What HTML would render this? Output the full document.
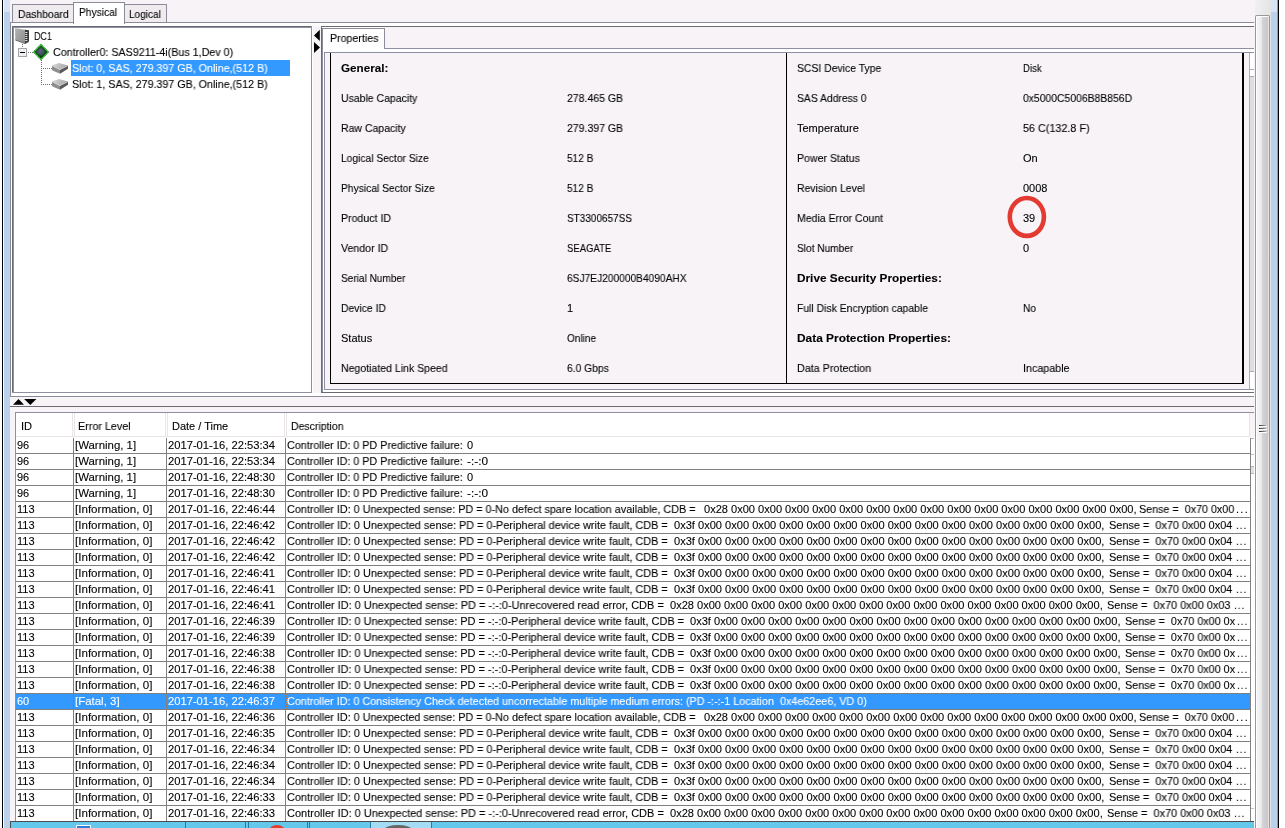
<!DOCTYPE html>
<html><head><meta charset="utf-8"><title>MegaRAID Storage Manager</title>
<style>
*{box-sizing:border-box}
html,body{margin:0;padding:0}
body{width:1285px;height:828px;overflow:hidden;background:#fff;position:relative;font-family:"Liberation Sans",sans-serif;font-size:11px;color:#000}
.a{position:absolute}
.t{position:absolute;white-space:pre;line-height:13px;height:13px;transform-origin:0 0;will-change:transform;-webkit-text-stroke:0.1px}
.b{font-weight:bold}
.hl{position:absolute;height:1px}
.vl{position:absolute;width:1px}
</style></head>
<body>
<div class="vl" style="left:2px;top:0px;height:828px;background:#000;width:1px"></div>
<div class="a" style="left:4px;top:0px;width:6px;height:828px;background:#b9d1ea;"></div>
<div class="a" style="left:4px;top:0px;width:6px;height:12px;background:#d6e4f3;"></div>
<div class="a" style="left:10px;top:0px;width:1245px;height:822px;background:#f7f3f7;"></div>
<div class="a" style="left:1271px;top:0px;width:6px;height:828px;background:#b9d1ea;"></div>
<div class="a" style="left:1271px;top:0px;width:6px;height:12px;background:#d6e4f3;"></div>
<div class="vl" style="left:1277px;top:0px;height:828px;background:#30c0f0;width:1px"></div>
<div class="vl" style="left:1278px;top:0px;height:828px;background:#000;width:1px"></div>
<div class="a" style="left:1255px;top:0px;width:16px;height:828px;background:linear-gradient(90deg,#f0f0f0,#e4e4e4);"></div>
<div class="a" style="left:1255px;top:15px;width:15px;height:813px;border:1px solid #989898;border-bottom:none;border-radius:2px 2px 0 0;background:linear-gradient(90deg,#f6f6f6 0%,#ececec 40%,#d4d4d8 50%,#c4c4c8 100%);box-shadow:inset 1px 1px 0 #fff,inset -1px 0 0 #e4e4e6"></div>
<div class="hl" style="left:1259px;top:425px;width:7px;background:linear-gradient(90deg,#2a2a2a,#a8a8a8)"></div>
<div class="hl" style="left:1259px;top:426px;width:8px;background:#fff"></div>
<div class="hl" style="left:1259px;top:428px;width:7px;background:linear-gradient(90deg,#2a2a2a,#a8a8a8)"></div>
<div class="hl" style="left:1259px;top:429px;width:8px;background:#fff"></div>
<div class="hl" style="left:1259px;top:431px;width:7px;background:linear-gradient(90deg,#2a2a2a,#a8a8a8)"></div>
<div class="hl" style="left:1259px;top:432px;width:8px;background:#fff"></div>
<div class="hl" style="left:10px;top:22px;width:1244px;background:#8c8c98"></div>
<div class="vl" style="left:10px;top:22px;height:375px;background:#8c8c98;width:1px"></div>
<div class="a" style="left:11px;top:23px;width:1243px;height:3px;background:#fff;"></div>
<div class="a" style="left:11px;top:393px;width:1243px;height:3px;background:#fff;"></div>
<div class="vl" style="left:11px;top:23px;height:373px;background:#fff;width:1px"></div>
<div class="a" style="left:12px;top:4px;width:62px;height:18px;background:#efebef;border:1px solid #8c8c98;border-bottom:none"></div>
<div id="t1" class="t " style="left:18.0px;top:8px;transform:scaleX(0.9407);">Dashboard</div>
<div class="a" style="left:124px;top:4px;width:43px;height:18px;background:#efebef;border:1px solid #8c8c98;border-bottom:none"></div>
<div id="t2" class="t " style="left:129.0px;top:8px;transform:scaleX(0.9143);">Logical</div>
<div class="a" style="left:73px;top:2px;width:52px;height:22px;background:#fff;border:1px solid #8c8c98;border-bottom:none"></div>
<div id="t3" class="t " style="left:79.0px;top:6px;transform:scaleX(0.9293);">Physical</div>
<div class="a" style="left:12px;top:26px;width:300px;height:367px;background:#fff;"></div>
<div class="hl" style="left:12px;top:26px;width:300px;background:#6a6a72"></div>
<div class="vl" style="left:12px;top:26px;height:367px;background:#6a6a72;width:1px"></div>
<div class="hl" style="left:13px;top:27px;width:299px;background:#8c90a0"></div>
<div class="vl" style="left:13px;top:27px;height:366px;background:#8c90a0;width:1px"></div>
<div class="vl" style="left:311px;top:26px;height:367px;background:#8c90a0;width:1px"></div>
<div class="hl" style="left:12px;top:392px;width:300px;background:#8c90a0"></div>
<div class="vl" style="left:312px;top:26px;height:367px;background:#fff;width:1px"></div>
<div class="a" style="left:71px;top:60px;width:219px;height:16px;background:#3399ff;"></div>
<div id="t4" class="t " style="left:34.0px;top:30px;transform:scaleX(0.8091);">DC1</div>
<div id="t5" class="t " style="left:53.0px;top:46px;transform:scaleX(0.9735);">Controller0: SAS9211-4i(Bus 1,Dev 0)</div>
<div id="t6" class="t " style="left:72.0px;top:62px;color:#fff;transform:scaleX(0.9726);">Slot: 0, SAS, 279.397 GB, Online,(512 B)</div>
<div id="t7" class="t " style="left:72.0px;top:78px;transform:scaleX(0.9726);">Slot: 1, SAS, 279.397 GB, Online,(512 B)</div>
<svg class="a" style="left:12px;top:26px" width="62" height="68" viewBox="12 26 62 68">
<defs>
<linearGradient id="g1" x1="0" y1="0" x2="1" y2="1"><stop offset="0" stop-color="#b4b4b4"/><stop offset="1" stop-color="#8c8c8c"/></linearGradient>
<linearGradient id="g2" x1="0" y1="0" x2="1" y2="0.300"><stop offset="0" stop-color="#d8d8d8"/><stop offset="0.500" stop-color="#c0c0c0"/><stop offset="1" stop-color="#a8a8a8"/></linearGradient>
<radialGradient id="g3" cx="0.450" cy="0.400" r="0.600"><stop offset="0" stop-color="#6a5a8a"/><stop offset="0.600" stop-color="#2a5a4a"/><stop offset="1" stop-color="#0a1a10"/></radialGradient>
</defs>
<g fill="#707070" shape-rendering="crispEdges">
<rect x="22" y="44" width="1" height="1"/><rect x="22" y="46" width="1" height="1"/>
<rect x="28" y="52" width="1" height="1"/><rect x="30" y="52" width="1" height="1"/><rect x="32" y="52" width="1" height="1"/>
<path d="M41 60h1v1h-1zM41 62h1v1h-1zM41 64h1v1h-1zM41 66h1v1h-1zM41 68h1v1h-1zM41 70h1v1h-1zM41 72h1v1h-1zM41 74h1v1h-1zM41 76h1v1h-1zM41 78h1v1h-1zM41 80h1v1h-1zM41 82h1v1h-1zM41 84h1v1h-1z"/>
<path d="M43 68h1v1h-1zM45 68h1v1h-1zM47 68h1v1h-1zM49 68h1v1h-1zM51 68h1v1h-1zM43 84h1v1h-1zM45 84h1v1h-1zM47 84h1v1h-1zM49 84h1v1h-1zM51 84h1v1h-1z"/>
</g>
<g shape-rendering="crispEdges"><rect x="18.500" y="48.500" width="8" height="8" fill="#f2eef2" stroke="#a4a4ac"/><rect x="20" y="52" width="5" height="1" fill="#000"/></g>
<g>
<path d="M15 28.200l10 1.600v13.700l-9.700-3.600z" fill="url(#g1)"/>
<path d="M15 28.200l10 1.600 4 0.400-10-1.700z" fill="#c8c8c8"/>
<path d="M25 29.800l4 0.400v11.300l-4 2.200z" fill="#3a3a3a"/>
<path d="M25.300 32.500h2M25.300 34.500h2M25.300 36.500h2M25.300 38.500h2M25.300 40.500h2" stroke="#e8e8e8" stroke-width="1"/>
<path d="M15.300 40l9.700 3.600 4-2.200" fill="none" stroke="#555" stroke-width="0.800"/>
</g>
<g>
<path d="M41 43.800l8 8.200-8 8.200-8-8.200z" fill="#2db82d"/>
<path d="M41 43.800l8 8.200-8 8.200-8-8.200z" fill="none" stroke="#1e7a1e" stroke-width="0.700" stroke-dasharray="1 1"/>
<path d="M41 46.300l5.700 5.700-5.700 5.700-5.700-5.700z" fill="url(#g3)" stroke="#0a200a" stroke-width="0.800" stroke-linejoin="round"/>
</g>
<g>
<path d="M52 65.600l7-2.600 9 2.500-8 4.200z" fill="url(#g2)"/>
<path d="M52 65.600l8 4.100v4l-8-3.400z" fill="#8e8e8e"/>
<path d="M60 69.700l8-4.200v3.200l-8 5z" fill="#585858"/>
<path d="M52 65.600l8 4.100 8-4.200" fill="none" stroke="#e4e4e4" stroke-width="0.600"/>
</g>
<g transform="translate(0 16)">
<path d="M52 65.600l7-2.600 9 2.500-8 4.200z" fill="url(#g2)"/>
<path d="M52 65.600l8 4.100v4l-8-3.400z" fill="#8e8e8e"/>
<path d="M60 69.700l8-4.200v3.200l-8 5z" fill="#585858"/>
<path d="M52 65.600l8 4.100 8-4.200" fill="none" stroke="#e4e4e4" stroke-width="0.600"/>
</g>
</svg>
<svg class="a" style="left:313px;top:29px" width="8" height="26" viewBox="313 29 8 26"><path d="M319.800 29.800v11.200l-5.800-5.600z" fill="#000"/><path d="M314 41.900v11.200l6-5.600z" fill="#000"/></svg>
<div class="hl" style="left:321px;top:26px;width:933px;background:#6a6a72"></div>
<div class="vl" style="left:321px;top:26px;height:367px;background:#6a6a72;width:1px"></div>
<div class="vl" style="left:322px;top:27px;height:365px;background:#8c90a0;width:1px"></div>
<div class="hl" style="left:321px;top:392px;width:933px;background:#6a6a72"></div>
<div class="a" style="left:322px;top:27px;width:63px;height:1px;background:#fff;"></div>
<div class="a" style="left:323px;top:28px;width:61px;height:24px;background:#fff;"></div>
<div class="hl" style="left:322px;top:28px;width:63px;background:#8c8c98"></div>
<div class="vl" style="left:322px;top:28px;height:21px;background:#8c8c98;width:1px"></div>
<div class="vl" style="left:384px;top:28px;height:22px;background:#8c8c98;width:1px"></div>
<div class="hl" style="left:384px;top:48px;width:870px;background:#8c90a0"></div>
<div class="a" style="left:323px;top:49px;width:931px;height:3px;background:#fff;"></div>
<div class="vl" style="left:323px;top:49px;height:343px;background:#fff;width:1px"></div>
<div class="a" style="left:323px;top:390px;width:931px;height:2px;background:#fff;"></div>
<div class="hl" style="left:324px;top:52px;width:930px;background:#8c90a0"></div>
<div class="vl" style="left:324px;top:52px;height:338px;background:#8c90a0;width:1px"></div>
<div class="hl" style="left:324px;top:389px;width:930px;background:#8c90a0"></div>
<div id="t8" class="t " style="left:330.0px;top:32px;transform:scaleX(0.9660);">Properties</div>
<div class="vl" style="left:330px;top:53px;height:331px;background:#000;width:1px"></div>
<div class="vl" style="left:786px;top:53px;height:331px;background:#000;width:1px"></div>
<div class="vl" style="left:1242px;top:53px;height:331px;background:#000;width:2px"></div>
<div class="hl" style="left:330px;top:383px;width:914px;background:#000"></div>
<div class="a" style="left:1250px;top:53px;width:4px;height:336px;background:#dedede;"></div>
<div class="a" style="left:1250px;top:53px;width:4px;height:23px;background:#fff;"></div>
<div class="hl" style="left:1250px;top:69px;width:4px;background:#aaa"></div>
<div class="hl" style="left:1250px;top:76px;width:4px;background:#aaa"></div>
<div class="a" style="left:1250px;top:371px;width:4px;height:18px;background:#fff;"></div>
<div class="hl" style="left:1250px;top:371px;width:4px;background:#aaa"></div>
<div class="vl" style="left:1249px;top:53px;height:336px;background:#b0b0b0;width:1px"></div>
<div id="t9" class="t b" style="left:341.0px;top:62px;transform:scaleX(1.0591);">General:</div>
<div id="t10" class="t " style="left:797.0px;top:62px;transform:scaleX(0.9461);">SCSI Device Type</div>
<div id="t11" class="t " style="left:1023.0px;top:62px;transform:scaleX(0.8682);">Disk</div>
<div id="t12" class="t " style="left:341.0px;top:92px;transform:scaleX(0.9538);">Usable Capacity</div>
<div id="t13" class="t " style="left:567.0px;top:92px;transform:scaleX(0.9552);">278.465 GB</div>
<div id="t14" class="t " style="left:797.0px;top:92px;transform:scaleX(0.9405);">SAS Address 0</div>
<div id="t15" class="t " style="left:1023.0px;top:92px;transform:scaleX(0.9431);">0x5000C5006B8B856D</div>
<div id="t16" class="t " style="left:341.0px;top:122px;transform:scaleX(0.9559);">Raw Capacity</div>
<div id="t17" class="t " style="left:567.0px;top:122px;transform:scaleX(0.9552);">279.397 GB</div>
<div id="t18" class="t " style="left:797.0px;top:122px;transform:scaleX(1.0000);">Temperature</div>
<div id="t19" class="t " style="left:1023.0px;top:122px;transform:scaleX(0.9809);">56 C(132.8 F)</div>
<div id="t20" class="t " style="left:341.0px;top:152px;transform:scaleX(0.9319);">Logical Sector Size</div>
<div id="t21" class="t " style="left:567.0px;top:152px;transform:scaleX(0.9138);">512 B</div>
<div id="t22" class="t " style="left:797.0px;top:152px;transform:scaleX(0.9606);">Power Status</div>
<div id="t23" class="t " style="left:1023.0px;top:152px;transform:scaleX(1.0000);">On</div>
<div id="t24" class="t " style="left:341.0px;top:182px;transform:scaleX(0.9340);">Physical Sector Size</div>
<div id="t25" class="t " style="left:567.0px;top:182px;transform:scaleX(0.9138);">512 B</div>
<div id="t26" class="t " style="left:797.0px;top:182px;transform:scaleX(0.9507);">Revision Level</div>
<div id="t27" class="t " style="left:1023.0px;top:182px;transform:scaleX(1.0000);">0008</div>
<div id="t28" class="t " style="left:341.0px;top:212px;transform:scaleX(0.9635);">Product ID</div>
<div id="t29" class="t " style="left:567.0px;top:212px;transform:scaleX(0.9069);">ST3300657SS</div>
<div id="t30" class="t " style="left:797.0px;top:212px;transform:scaleX(0.9578);">Media Error Count</div>
<div id="t31" class="t " style="left:1023.0px;top:212px;transform:scaleX(1.0000);">39</div>
<div id="t32" class="t " style="left:341.0px;top:242px;transform:scaleX(0.9633);">Vendor ID</div>
<div id="t33" class="t " style="left:567.0px;top:242px;transform:scaleX(0.8667);">SEAGATE</div>
<div id="t34" class="t " style="left:797.0px;top:242px;transform:scaleX(0.9210);">Slot Number</div>
<div id="t35" class="t " style="left:1023.0px;top:242px;transform:scaleX(1.0000);">0</div>
<div id="t36" class="t " style="left:341.0px;top:272px;transform:scaleX(0.9155);">Serial Number</div>
<div id="t37" class="t " style="left:567.0px;top:272px;transform:scaleX(0.9264);">6SJ7EJ200000B4090AHX</div>
<div id="t38" class="t b" style="left:797.0px;top:272px;transform:scaleX(1.0719);">Drive Security Properties:</div>
<div id="t39" class="t " style="left:341.0px;top:302px;transform:scaleX(0.9417);">Device ID</div>
<div id="t40" class="t " style="left:567.2px;top:302px;transform:scaleX(1.0000);">1</div>
<div id="t41" class="t " style="left:797.0px;top:302px;transform:scaleX(0.9439);">Full Disk Encryption capable</div>
<div id="t42" class="t " style="left:1023.0px;top:302px;transform:scaleX(0.9214);">No</div>
<div id="t43" class="t " style="left:341.0px;top:332px;transform:scaleX(1.0000);">Status</div>
<div id="t44" class="t " style="left:567.0px;top:332px;transform:scaleX(0.9125);">Online</div>
<div id="t45" class="t b" style="left:797.0px;top:332px;transform:scaleX(1.0810);">Data Protection Properties:</div>
<div id="t46" class="t " style="left:341.0px;top:362px;transform:scaleX(0.9577);">Negotiated Link Speed</div>
<div id="t47" class="t " style="left:567.0px;top:362px;transform:scaleX(0.9356);">6.0 Gbps</div>
<div id="t48" class="t " style="left:797.0px;top:362px;transform:scaleX(0.9776);">Data Protection</div>
<div id="t49" class="t " style="left:1023.0px;top:362px;transform:scaleX(0.9750);">Incapable</div>
<svg class="a" style="left:1004px;top:192px" width="46" height="50" viewBox="1004 192 46 50"><ellipse cx="1026.850" cy="216.950" rx="17.050" ry="18.950" fill="none" stroke="#e33a31" stroke-width="4.600"/></svg>
<div class="hl" style="left:10px;top:396px;width:1244px;background:#8c8c98"></div>
<div class="hl" style="left:10px;top:406px;width:1244px;background:#6a6a72"></div>
<svg class="a" style="left:12px;top:398px" width="26" height="8" viewBox="12 398 26 8"><path d="M13 404.800h11l-5.500-5.800z" fill="#000"/><path d="M24.200 399h12.200l-6.100 6z" fill="#000"/></svg>
<div class="a" style="left:16px;top:413px;width:1234px;height:409px;background:#fff;"></div>
<div class="hl" style="left:15px;top:412px;width:1239px;background:#8c90a0"></div>
<div class="vl" style="left:15px;top:412px;height:410px;background:#8c90a0;width:1px"></div>
<div class="a" style="left:1250px;top:413px;width:4px;height:24px;background:#f7f3f7;"></div>
<div class="a" style="left:1251px;top:437px;width:4px;height:385px;background:#fff;"></div>
<div class="hl" style="left:1251px;top:438px;width:3px;background:#b4b4b4"></div>
<div class="hl" style="left:1251px;top:454px;width:3px;background:#c4c4c4"></div>
<div class="a" style="left:1251px;top:466px;width:3px;height:8px;background:#e2e2e2;"></div>
<div class="hl" style="left:1251px;top:466px;width:3px;background:#b4b4b4"></div>
<div class="hl" style="left:1251px;top:473px;width:3px;background:#b4b4b4"></div>
<div class="hl" style="left:1251px;top:808px;width:3px;background:#c4c4c4"></div>
<div class="hl" style="left:16px;top:436px;width:1234px;background:#e8e4e8"></div>
<div class="vl" style="left:72px;top:413px;height:24px;background:#e9e5e9;width:1px"></div>
<div class="vl" style="left:74px;top:413px;height:24px;background:#e9e5e9;width:1px"></div>
<div class="vl" style="left:165px;top:413px;height:24px;background:#e9e5e9;width:1px"></div>
<div class="vl" style="left:167px;top:413px;height:24px;background:#e9e5e9;width:1px"></div>
<div class="vl" style="left:284px;top:413px;height:24px;background:#e9e5e9;width:1px"></div>
<div class="vl" style="left:286px;top:413px;height:24px;background:#e9e5e9;width:1px"></div>
<div class="vl" style="left:1249px;top:413px;height:24px;background:#e9e5e9;width:1px"></div>
<div id="t50" class="t " style="left:21.0px;top:420px;transform:scaleX(1.0101);">ID</div>
<div id="t51" class="t " style="left:78.0px;top:420px;transform:scaleX(0.9792);">Error Level</div>
<div id="t52" class="t " style="left:172.0px;top:420px;transform:scaleX(1.0000);">Date / Time</div>
<div id="t53" class="t " style="left:291.0px;top:420px;transform:scaleX(0.9545);">Description</div>
<div class="vl" style="left:73px;top:438px;height:384px;background:#808080;width:1px"></div>
<div class="vl" style="left:166px;top:438px;height:384px;background:#808080;width:1px"></div>
<div class="vl" style="left:285px;top:438px;height:384px;background:#808080;width:1px"></div>
<div class="vl" style="left:1250px;top:438px;height:384px;background:#808080;width:1px"></div>
<div class="hl" style="left:16px;top:453px;width:1235px;background:#808080"></div>
<div id="t54" class="t " style="left:17.0px;top:439px;transform:scaleX(1.0000);">96</div>
<div id="t55" class="t " style="left:75.0px;top:439px;transform:scaleX(1.0373);">[Warning, 1]</div>
<div id="t56" class="t " style="left:168.0px;top:439px;transform:scaleX(1.0171);">2017-01-16, 22:53:34</div>
<div id="t57" class="t " style="left:287.0px;top:439px;transform:scaleX(0.9780);">Controller ID: 0 PD Predictive failure:</div>
<div id="t58" class="t " style="left:466.6px;top:439px;transform:scaleX(1.0000);">0</div>
<div class="hl" style="left:16px;top:469px;width:1235px;background:#808080"></div>
<div id="t59" class="t " style="left:17.0px;top:455px;transform:scaleX(1.0000);">96</div>
<div id="t60" class="t " style="left:75.0px;top:455px;transform:scaleX(1.0373);">[Warning, 1]</div>
<div id="t61" class="t " style="left:168.0px;top:455px;transform:scaleX(1.0171);">2017-01-16, 22:53:34</div>
<div id="t62" class="t " style="left:287.0px;top:455px;transform:scaleX(0.9780);">Controller ID: 0 PD Predictive failure:</div>
<div id="t63" class="t " style="left:466.6px;top:455px;transform:scaleX(1.0750);">-:-:0</div>
<div class="hl" style="left:16px;top:485px;width:1235px;background:#808080"></div>
<div id="t64" class="t " style="left:17.0px;top:471px;transform:scaleX(1.0000);">96</div>
<div id="t65" class="t " style="left:75.0px;top:471px;transform:scaleX(1.0373);">[Warning, 1]</div>
<div id="t66" class="t " style="left:168.0px;top:471px;transform:scaleX(1.0171);">2017-01-16, 22:48:30</div>
<div id="t67" class="t " style="left:287.0px;top:471px;transform:scaleX(0.9780);">Controller ID: 0 PD Predictive failure:</div>
<div id="t68" class="t " style="left:466.6px;top:471px;transform:scaleX(1.0000);">0</div>
<div class="hl" style="left:16px;top:501px;width:1235px;background:#808080"></div>
<div id="t69" class="t " style="left:17.0px;top:487px;transform:scaleX(1.0000);">96</div>
<div id="t70" class="t " style="left:75.0px;top:487px;transform:scaleX(1.0373);">[Warning, 1]</div>
<div id="t71" class="t " style="left:168.0px;top:487px;transform:scaleX(1.0171);">2017-01-16, 22:48:30</div>
<div id="t72" class="t " style="left:287.0px;top:487px;transform:scaleX(0.9780);">Controller ID: 0 PD Predictive failure:</div>
<div id="t73" class="t " style="left:466.6px;top:487px;transform:scaleX(1.0750);">-:-:0</div>
<div class="hl" style="left:16px;top:517px;width:1235px;background:#808080"></div>
<div id="t74" class="t " style="left:17.0px;top:503px;transform:scaleX(1.0000);">113</div>
<div id="t75" class="t " style="left:75.0px;top:503px;transform:scaleX(1.0548);">[Information, 0]</div>
<div id="t76" class="t " style="left:168.0px;top:503px;transform:scaleX(1.0171);">2017-01-16, 22:46:44</div>
<div id="t77" class="t " style="left:287.2px;top:503px;transform:scaleX(0.9827);">Controller ID: 0 Unexpected sense: PD = 0-No defect spare location available, CDB =</div>
<div id="t78" class="t " style="left:704.1px;top:503px;transform:scaleX(1.0046);">0x28 0x00 0x00 0x00 0x00 0x00 0x00 0x00 0x00 0x00 0x00 0x00 0x00 0x00 0x00 0x00,</div>
<div id="t79" class="t " style="left:1139.0px;top:503px;transform:scaleX(0.9759);">Sense =  0x70 0x00</div>
<div id="t80" class="t " style="left:1236.4px;top:503px;letter-spacing:1.2px;transform:scaleX(1.0209);">...</div>
<div class="hl" style="left:16px;top:533px;width:1235px;background:#808080"></div>
<div id="t81" class="t " style="left:17.0px;top:519px;transform:scaleX(1.0000);">113</div>
<div id="t82" class="t " style="left:75.0px;top:519px;transform:scaleX(1.0548);">[Information, 0]</div>
<div id="t83" class="t " style="left:168.0px;top:519px;transform:scaleX(1.0171);">2017-01-16, 22:46:42</div>
<div id="t84" class="t " style="left:287.2px;top:519px;transform:scaleX(0.9870);">Controller ID: 0 Unexpected sense: PD = 0-Peripheral device write fault, CDB =</div>
<div id="t85" class="t " style="left:674.0px;top:519px;transform:scaleX(1.0068);">0x3f 0x00 0x00 0x00 0x00 0x00 0x00 0x00 0x00 0x00 0x00 0x00 0x00 0x00 0x00 0x00,</div>
<div id="t86" class="t " style="left:1109.1px;top:519px;transform:scaleX(0.9905);">Sense =  0x70 0x00 0x04</div>
<div id="t87" class="t " style="left:1236.0px;top:519px;letter-spacing:1.2px;transform:scaleX(0.8818);">...</div>
<div class="hl" style="left:16px;top:549px;width:1235px;background:#808080"></div>
<div id="t88" class="t " style="left:17.0px;top:535px;transform:scaleX(1.0000);">113</div>
<div id="t89" class="t " style="left:75.0px;top:535px;transform:scaleX(1.0548);">[Information, 0]</div>
<div id="t90" class="t " style="left:168.0px;top:535px;transform:scaleX(1.0171);">2017-01-16, 22:46:42</div>
<div id="t91" class="t " style="left:287.2px;top:535px;transform:scaleX(0.9870);">Controller ID: 0 Unexpected sense: PD = 0-Peripheral device write fault, CDB =</div>
<div id="t92" class="t " style="left:674.0px;top:535px;transform:scaleX(1.0068);">0x3f 0x00 0x00 0x00 0x00 0x00 0x00 0x00 0x00 0x00 0x00 0x00 0x00 0x00 0x00 0x00,</div>
<div id="t93" class="t " style="left:1109.1px;top:535px;transform:scaleX(0.9905);">Sense =  0x70 0x00 0x04</div>
<div id="t94" class="t " style="left:1236.0px;top:535px;letter-spacing:1.2px;transform:scaleX(0.8818);">...</div>
<div class="hl" style="left:16px;top:565px;width:1235px;background:#808080"></div>
<div id="t95" class="t " style="left:17.0px;top:551px;transform:scaleX(1.0000);">113</div>
<div id="t96" class="t " style="left:75.0px;top:551px;transform:scaleX(1.0548);">[Information, 0]</div>
<div id="t97" class="t " style="left:168.0px;top:551px;transform:scaleX(1.0171);">2017-01-16, 22:46:42</div>
<div id="t98" class="t " style="left:287.2px;top:551px;transform:scaleX(0.9870);">Controller ID: 0 Unexpected sense: PD = 0-Peripheral device write fault, CDB =</div>
<div id="t99" class="t " style="left:674.0px;top:551px;transform:scaleX(1.0068);">0x3f 0x00 0x00 0x00 0x00 0x00 0x00 0x00 0x00 0x00 0x00 0x00 0x00 0x00 0x00 0x00,</div>
<div id="t100" class="t " style="left:1109.1px;top:551px;transform:scaleX(0.9905);">Sense =  0x70 0x00 0x04</div>
<div id="t101" class="t " style="left:1236.0px;top:551px;letter-spacing:1.2px;transform:scaleX(0.8818);">...</div>
<div class="hl" style="left:16px;top:581px;width:1235px;background:#808080"></div>
<div id="t102" class="t " style="left:17.0px;top:567px;transform:scaleX(1.0000);">113</div>
<div id="t103" class="t " style="left:75.0px;top:567px;transform:scaleX(1.0548);">[Information, 0]</div>
<div id="t104" class="t " style="left:168.0px;top:567px;transform:scaleX(1.0171);">2017-01-16, 22:46:41</div>
<div id="t105" class="t " style="left:287.2px;top:567px;transform:scaleX(0.9870);">Controller ID: 0 Unexpected sense: PD = 0-Peripheral device write fault, CDB =</div>
<div id="t106" class="t " style="left:674.0px;top:567px;transform:scaleX(1.0068);">0x3f 0x00 0x00 0x00 0x00 0x00 0x00 0x00 0x00 0x00 0x00 0x00 0x00 0x00 0x00 0x00,</div>
<div id="t107" class="t " style="left:1109.1px;top:567px;transform:scaleX(0.9905);">Sense =  0x70 0x00 0x04</div>
<div id="t108" class="t " style="left:1236.0px;top:567px;letter-spacing:1.2px;transform:scaleX(0.8818);">...</div>
<div class="hl" style="left:16px;top:597px;width:1235px;background:#808080"></div>
<div id="t109" class="t " style="left:17.0px;top:583px;transform:scaleX(1.0000);">113</div>
<div id="t110" class="t " style="left:75.0px;top:583px;transform:scaleX(1.0548);">[Information, 0]</div>
<div id="t111" class="t " style="left:168.0px;top:583px;transform:scaleX(1.0171);">2017-01-16, 22:46:41</div>
<div id="t112" class="t " style="left:287.2px;top:583px;transform:scaleX(0.9870);">Controller ID: 0 Unexpected sense: PD = 0-Peripheral device write fault, CDB =</div>
<div id="t113" class="t " style="left:674.0px;top:583px;transform:scaleX(1.0068);">0x3f 0x00 0x00 0x00 0x00 0x00 0x00 0x00 0x00 0x00 0x00 0x00 0x00 0x00 0x00 0x00,</div>
<div id="t114" class="t " style="left:1109.1px;top:583px;transform:scaleX(0.9905);">Sense =  0x70 0x00 0x04</div>
<div id="t115" class="t " style="left:1236.0px;top:583px;letter-spacing:1.2px;transform:scaleX(0.8818);">...</div>
<div class="hl" style="left:16px;top:613px;width:1235px;background:#808080"></div>
<div id="t116" class="t " style="left:17.0px;top:599px;transform:scaleX(1.0000);">113</div>
<div id="t117" class="t " style="left:75.0px;top:599px;transform:scaleX(1.0548);">[Information, 0]</div>
<div id="t118" class="t " style="left:168.0px;top:599px;transform:scaleX(1.0171);">2017-01-16, 22:46:41</div>
<div id="t119" class="t " style="left:287.2px;top:599px;transform:scaleX(0.9971);">Controller ID: 0 Unexpected sense: PD = -:-:0-Unrecovered read error, CDB =</div>
<div id="t120" class="t " style="left:670.0px;top:599px;transform:scaleX(1.0051);">0x28 0x00 0x00 0x00 0x00 0x00 0x00 0x00 0x00 0x00 0x00 0x00 0x00 0x00 0x00 0x00,</div>
<div id="t121" class="t " style="left:1107.0px;top:599px;transform:scaleX(0.9927);">Sense =  0x70 0x00 0x03</div>
<div id="t122" class="t " style="left:1234.0px;top:599px;letter-spacing:1.2px;transform:scaleX(0.8909);">...</div>
<div class="hl" style="left:16px;top:629px;width:1235px;background:#808080"></div>
<div id="t123" class="t " style="left:17.0px;top:615px;transform:scaleX(1.0000);">113</div>
<div id="t124" class="t " style="left:75.0px;top:615px;transform:scaleX(1.0548);">[Information, 0]</div>
<div id="t125" class="t " style="left:168.0px;top:615px;transform:scaleX(1.0171);">2017-01-16, 22:46:39</div>
<div id="t126" class="t " style="left:287.2px;top:615px;transform:scaleX(0.9945);">Controller ID: 0 Unexpected sense: PD = -:-:0-Peripheral device write fault, CDB =</div>
<div id="t127" class="t " style="left:690.0px;top:615px;transform:scaleX(1.0070);">0x3f 0x00 0x00 0x00 0x00 0x00 0x00 0x00 0x00 0x00 0x00 0x00 0x00 0x00 0x00 0x00,</div>
<div id="t128" class="t " style="left:1125.1px;top:615px;transform:scaleX(0.9809);">Sense =  0x70 0x00 0x</div>
<div id="t129" class="t " style="left:1237.0px;top:615px;letter-spacing:1.2px;transform:scaleX(0.8727);">...</div>
<div class="hl" style="left:16px;top:645px;width:1235px;background:#808080"></div>
<div id="t130" class="t " style="left:17.0px;top:631px;transform:scaleX(1.0000);">113</div>
<div id="t131" class="t " style="left:75.0px;top:631px;transform:scaleX(1.0548);">[Information, 0]</div>
<div id="t132" class="t " style="left:168.0px;top:631px;transform:scaleX(1.0171);">2017-01-16, 22:46:39</div>
<div id="t133" class="t " style="left:287.2px;top:631px;transform:scaleX(0.9945);">Controller ID: 0 Unexpected sense: PD = -:-:0-Peripheral device write fault, CDB =</div>
<div id="t134" class="t " style="left:690.0px;top:631px;transform:scaleX(1.0070);">0x3f 0x00 0x00 0x00 0x00 0x00 0x00 0x00 0x00 0x00 0x00 0x00 0x00 0x00 0x00 0x00,</div>
<div id="t135" class="t " style="left:1125.1px;top:631px;transform:scaleX(0.9809);">Sense =  0x70 0x00 0x</div>
<div id="t136" class="t " style="left:1237.0px;top:631px;letter-spacing:1.2px;transform:scaleX(0.8727);">...</div>
<div class="hl" style="left:16px;top:661px;width:1235px;background:#808080"></div>
<div id="t137" class="t " style="left:17.0px;top:647px;transform:scaleX(1.0000);">113</div>
<div id="t138" class="t " style="left:75.0px;top:647px;transform:scaleX(1.0548);">[Information, 0]</div>
<div id="t139" class="t " style="left:168.0px;top:647px;transform:scaleX(1.0171);">2017-01-16, 22:46:38</div>
<div id="t140" class="t " style="left:287.2px;top:647px;transform:scaleX(0.9945);">Controller ID: 0 Unexpected sense: PD = -:-:0-Peripheral device write fault, CDB =</div>
<div id="t141" class="t " style="left:690.0px;top:647px;transform:scaleX(1.0070);">0x3f 0x00 0x00 0x00 0x00 0x00 0x00 0x00 0x00 0x00 0x00 0x00 0x00 0x00 0x00 0x00,</div>
<div id="t142" class="t " style="left:1125.1px;top:647px;transform:scaleX(0.9809);">Sense =  0x70 0x00 0x</div>
<div id="t143" class="t " style="left:1237.0px;top:647px;letter-spacing:1.2px;transform:scaleX(0.8727);">...</div>
<div class="hl" style="left:16px;top:677px;width:1235px;background:#808080"></div>
<div id="t144" class="t " style="left:17.0px;top:663px;transform:scaleX(1.0000);">113</div>
<div id="t145" class="t " style="left:75.0px;top:663px;transform:scaleX(1.0548);">[Information, 0]</div>
<div id="t146" class="t " style="left:168.0px;top:663px;transform:scaleX(1.0171);">2017-01-16, 22:46:38</div>
<div id="t147" class="t " style="left:287.2px;top:663px;transform:scaleX(0.9945);">Controller ID: 0 Unexpected sense: PD = -:-:0-Peripheral device write fault, CDB =</div>
<div id="t148" class="t " style="left:690.0px;top:663px;transform:scaleX(1.0070);">0x3f 0x00 0x00 0x00 0x00 0x00 0x00 0x00 0x00 0x00 0x00 0x00 0x00 0x00 0x00 0x00,</div>
<div id="t149" class="t " style="left:1125.1px;top:663px;transform:scaleX(0.9809);">Sense =  0x70 0x00 0x</div>
<div id="t150" class="t " style="left:1237.0px;top:663px;letter-spacing:1.2px;transform:scaleX(0.8727);">...</div>
<div class="hl" style="left:16px;top:693px;width:1235px;background:#808080"></div>
<div id="t151" class="t " style="left:17.0px;top:679px;transform:scaleX(1.0000);">113</div>
<div id="t152" class="t " style="left:75.0px;top:679px;transform:scaleX(1.0548);">[Information, 0]</div>
<div id="t153" class="t " style="left:168.0px;top:679px;transform:scaleX(1.0171);">2017-01-16, 22:46:38</div>
<div id="t154" class="t " style="left:287.2px;top:679px;transform:scaleX(0.9945);">Controller ID: 0 Unexpected sense: PD = -:-:0-Peripheral device write fault, CDB =</div>
<div id="t155" class="t " style="left:690.0px;top:679px;transform:scaleX(1.0070);">0x3f 0x00 0x00 0x00 0x00 0x00 0x00 0x00 0x00 0x00 0x00 0x00 0x00 0x00 0x00 0x00,</div>
<div id="t156" class="t " style="left:1125.1px;top:679px;transform:scaleX(0.9809);">Sense =  0x70 0x00 0x</div>
<div id="t157" class="t " style="left:1237.0px;top:679px;letter-spacing:1.2px;transform:scaleX(0.8727);">...</div>
<div class="a" style="left:16px;top:694px;width:1234px;height:15px;background:#3399ff;"></div>
<div class="vl" style="left:73px;top:694px;height:15px;background:#808080;width:1px"></div>
<div class="vl" style="left:166px;top:694px;height:15px;background:#808080;width:1px"></div>
<div class="vl" style="left:285px;top:694px;height:15px;background:#808080;width:1px"></div>
<div class="a" style="left:286px;top:694px;width:964px;height:15px;border:1px dotted #c8741f"></div>
<div class="hl" style="left:16px;top:709px;width:1235px;background:#808080"></div>
<div id="t158" class="t " style="left:17.0px;top:695px;color:#fff;transform:scaleX(1.0000);">60</div>
<div id="t159" class="t " style="left:75.0px;top:695px;color:#fff;transform:scaleX(1.0419);">[Fatal, 3]</div>
<div id="t160" class="t " style="left:168.0px;top:695px;color:#fff;transform:scaleX(1.0171);">2017-01-16, 22:46:37</div>
<div id="t161" class="t " style="left:287.0px;top:695px;color:#fff;transform:scaleX(0.9797);">Controller ID: 0 Consistency Check detected uncorrectable multiple medium errors: (PD -:-:-1 Location  0x4e62ee6, VD 0)</div>
<div class="hl" style="left:16px;top:725px;width:1235px;background:#808080"></div>
<div id="t162" class="t " style="left:17.0px;top:711px;transform:scaleX(1.0000);">113</div>
<div id="t163" class="t " style="left:75.0px;top:711px;transform:scaleX(1.0548);">[Information, 0]</div>
<div id="t164" class="t " style="left:168.0px;top:711px;transform:scaleX(1.0171);">2017-01-16, 22:46:36</div>
<div id="t165" class="t " style="left:287.2px;top:711px;transform:scaleX(0.9827);">Controller ID: 0 Unexpected sense: PD = 0-No defect spare location available, CDB =</div>
<div id="t166" class="t " style="left:704.1px;top:711px;transform:scaleX(1.0046);">0x28 0x00 0x00 0x00 0x00 0x00 0x00 0x00 0x00 0x00 0x00 0x00 0x00 0x00 0x00 0x00,</div>
<div id="t167" class="t " style="left:1139.0px;top:711px;transform:scaleX(0.9759);">Sense =  0x70 0x00</div>
<div id="t168" class="t " style="left:1236.4px;top:711px;letter-spacing:1.2px;transform:scaleX(1.0209);">...</div>
<div class="hl" style="left:16px;top:741px;width:1235px;background:#808080"></div>
<div id="t169" class="t " style="left:17.0px;top:727px;transform:scaleX(1.0000);">113</div>
<div id="t170" class="t " style="left:75.0px;top:727px;transform:scaleX(1.0548);">[Information, 0]</div>
<div id="t171" class="t " style="left:168.0px;top:727px;transform:scaleX(1.0171);">2017-01-16, 22:46:35</div>
<div id="t172" class="t " style="left:287.2px;top:727px;transform:scaleX(0.9870);">Controller ID: 0 Unexpected sense: PD = 0-Peripheral device write fault, CDB =</div>
<div id="t173" class="t " style="left:674.0px;top:727px;transform:scaleX(1.0068);">0x3f 0x00 0x00 0x00 0x00 0x00 0x00 0x00 0x00 0x00 0x00 0x00 0x00 0x00 0x00 0x00,</div>
<div id="t174" class="t " style="left:1109.1px;top:727px;transform:scaleX(0.9905);">Sense =  0x70 0x00 0x04</div>
<div id="t175" class="t " style="left:1236.0px;top:727px;letter-spacing:1.2px;transform:scaleX(0.8818);">...</div>
<div class="hl" style="left:16px;top:757px;width:1235px;background:#808080"></div>
<div id="t176" class="t " style="left:17.0px;top:743px;transform:scaleX(1.0000);">113</div>
<div id="t177" class="t " style="left:75.0px;top:743px;transform:scaleX(1.0548);">[Information, 0]</div>
<div id="t178" class="t " style="left:168.0px;top:743px;transform:scaleX(1.0171);">2017-01-16, 22:46:34</div>
<div id="t179" class="t " style="left:287.2px;top:743px;transform:scaleX(0.9870);">Controller ID: 0 Unexpected sense: PD = 0-Peripheral device write fault, CDB =</div>
<div id="t180" class="t " style="left:674.0px;top:743px;transform:scaleX(1.0068);">0x3f 0x00 0x00 0x00 0x00 0x00 0x00 0x00 0x00 0x00 0x00 0x00 0x00 0x00 0x00 0x00,</div>
<div id="t181" class="t " style="left:1109.1px;top:743px;transform:scaleX(0.9905);">Sense =  0x70 0x00 0x04</div>
<div id="t182" class="t " style="left:1236.0px;top:743px;letter-spacing:1.2px;transform:scaleX(0.8818);">...</div>
<div class="hl" style="left:16px;top:773px;width:1235px;background:#808080"></div>
<div id="t183" class="t " style="left:17.0px;top:759px;transform:scaleX(1.0000);">113</div>
<div id="t184" class="t " style="left:75.0px;top:759px;transform:scaleX(1.0548);">[Information, 0]</div>
<div id="t185" class="t " style="left:168.0px;top:759px;transform:scaleX(1.0171);">2017-01-16, 22:46:34</div>
<div id="t186" class="t " style="left:287.2px;top:759px;transform:scaleX(0.9870);">Controller ID: 0 Unexpected sense: PD = 0-Peripheral device write fault, CDB =</div>
<div id="t187" class="t " style="left:674.0px;top:759px;transform:scaleX(1.0068);">0x3f 0x00 0x00 0x00 0x00 0x00 0x00 0x00 0x00 0x00 0x00 0x00 0x00 0x00 0x00 0x00,</div>
<div id="t188" class="t " style="left:1109.1px;top:759px;transform:scaleX(0.9905);">Sense =  0x70 0x00 0x04</div>
<div id="t189" class="t " style="left:1236.0px;top:759px;letter-spacing:1.2px;transform:scaleX(0.8818);">...</div>
<div class="hl" style="left:16px;top:789px;width:1235px;background:#808080"></div>
<div id="t190" class="t " style="left:17.0px;top:775px;transform:scaleX(1.0000);">113</div>
<div id="t191" class="t " style="left:75.0px;top:775px;transform:scaleX(1.0548);">[Information, 0]</div>
<div id="t192" class="t " style="left:168.0px;top:775px;transform:scaleX(1.0171);">2017-01-16, 22:46:34</div>
<div id="t193" class="t " style="left:287.2px;top:775px;transform:scaleX(0.9870);">Controller ID: 0 Unexpected sense: PD = 0-Peripheral device write fault, CDB =</div>
<div id="t194" class="t " style="left:674.0px;top:775px;transform:scaleX(1.0068);">0x3f 0x00 0x00 0x00 0x00 0x00 0x00 0x00 0x00 0x00 0x00 0x00 0x00 0x00 0x00 0x00,</div>
<div id="t195" class="t " style="left:1109.1px;top:775px;transform:scaleX(0.9905);">Sense =  0x70 0x00 0x04</div>
<div id="t196" class="t " style="left:1236.0px;top:775px;letter-spacing:1.2px;transform:scaleX(0.8818);">...</div>
<div class="hl" style="left:16px;top:805px;width:1235px;background:#808080"></div>
<div id="t197" class="t " style="left:17.0px;top:791px;transform:scaleX(1.0000);">113</div>
<div id="t198" class="t " style="left:75.0px;top:791px;transform:scaleX(1.0548);">[Information, 0]</div>
<div id="t199" class="t " style="left:168.0px;top:791px;transform:scaleX(1.0171);">2017-01-16, 22:46:33</div>
<div id="t200" class="t " style="left:287.2px;top:791px;transform:scaleX(0.9870);">Controller ID: 0 Unexpected sense: PD = 0-Peripheral device write fault, CDB =</div>
<div id="t201" class="t " style="left:674.0px;top:791px;transform:scaleX(1.0068);">0x3f 0x00 0x00 0x00 0x00 0x00 0x00 0x00 0x00 0x00 0x00 0x00 0x00 0x00 0x00 0x00,</div>
<div id="t202" class="t " style="left:1109.1px;top:791px;transform:scaleX(0.9905);">Sense =  0x70 0x00 0x04</div>
<div id="t203" class="t " style="left:1236.0px;top:791px;letter-spacing:1.2px;transform:scaleX(0.8818);">...</div>
<div class="hl" style="left:16px;top:821px;width:1235px;background:#808080"></div>
<div id="t204" class="t " style="left:17.0px;top:807px;transform:scaleX(1.0000);">113</div>
<div id="t205" class="t " style="left:75.0px;top:807px;transform:scaleX(1.0548);">[Information, 0]</div>
<div id="t206" class="t " style="left:168.0px;top:807px;transform:scaleX(1.0171);">2017-01-16, 22:46:33</div>
<div id="t207" class="t " style="left:287.2px;top:807px;transform:scaleX(0.9971);">Controller ID: 0 Unexpected sense: PD = -:-:0-Unrecovered read error, CDB =</div>
<div id="t208" class="t " style="left:670.0px;top:807px;transform:scaleX(1.0051);">0x28 0x00 0x00 0x00 0x00 0x00 0x00 0x00 0x00 0x00 0x00 0x00 0x00 0x00 0x00 0x00,</div>
<div id="t209" class="t " style="left:1107.0px;top:807px;transform:scaleX(0.9927);">Sense =  0x70 0x00 0x03</div>
<div id="t210" class="t " style="left:1234.0px;top:807px;letter-spacing:1.2px;transform:scaleX(0.8909);">...</div>
<div class="a" style="left:10px;top:822px;width:1244px;height:6px;background:#64c8ec;"></div>
<div class="hl" style="left:10px;top:821px;width:1244px;background:#4c4c4c"></div>
<div class="vl" style="left:10px;top:821px;height:7px;background:#4c4c4c;width:1px"></div>
<div class="vl" style="left:185px;top:822px;height:6px;background:#2a7aa0;width:1px"></div>
<div class="vl" style="left:245px;top:822px;height:6px;background:#2a7aa0;width:1px"></div>
<div class="vl" style="left:248px;top:822px;height:6px;background:#2a7aa0;width:1px"></div>
<div class="vl" style="left:307px;top:822px;height:6px;background:#2a7aa0;width:1px"></div>
<div class="vl" style="left:309px;top:822px;height:6px;background:#2a7aa0;width:1px"></div>
<div class="vl" style="left:370px;top:822px;height:6px;background:#2a7aa0;width:1px"></div>
<div class="vl" style="left:431px;top:822px;height:6px;background:#2a7aa0;width:1px"></div>
<div class="a" style="left:371px;top:822px;width:60px;height:6px;background:#a4dcf4;"></div>
<div class="a" style="left:76px;top:825px;width:15px;height:3px;background:#fff;border-radius:1px 1px 0 0"></div>
<div class="a" style="left:77px;top:826px;width:13px;height:2px;background:#2a80d8;"></div>
<div class="a" style="left:270px;top:825px;width:14px;height:8px;border-radius:50%;background:#e04030"></div>
<div class="a" style="left:385px;top:825px;width:26px;height:8px;border-radius:50%;background:#666"></div>
</body></html>
